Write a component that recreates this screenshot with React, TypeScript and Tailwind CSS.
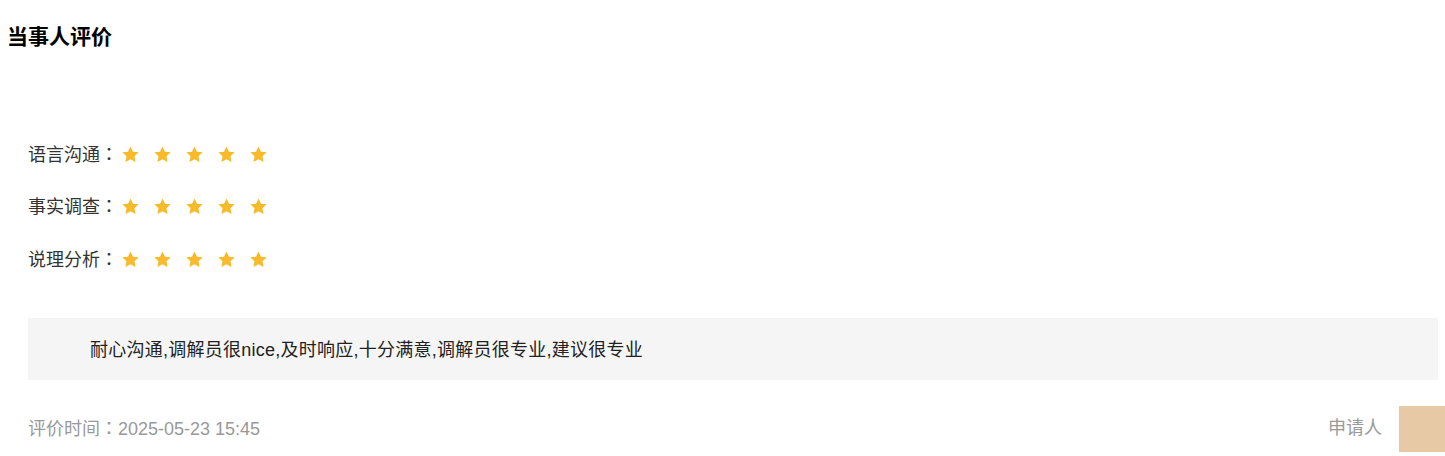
const FONT = "font-['Liberation_Sans','Noto_Sans_CJK_SC',sans-serif]";
// 全角冒号居中显示（JP 字形）
const COLON = "font-['Noto_Sans_CJK_JP',sans-serif]";

const ROWS = [
  { label: "语言沟通", score: 5 },
  { label: "事实调查", score: 5 },
  { label: "说理分析", score: 5 },
];

function Star() {
  return (
    <svg viewBox="0 0 24 24" className="h-[19px] w-[19px]">
      <path
        d="M12 1.8l3.1 6.6 7.2.9-5.3 5 1.4 7.1L12 17.9l-6.4 3.5 1.4-7.1-5.3-5 7.2-.9z"
        fill="#f7ba2a"
      />
    </svg>
  );
}

export default function App() {
  return (
    <div className={`w-[1445px] h-[456px] overflow-hidden bg-white ${FONT}`}>
      <h2 className="pl-[7px] pt-[24px] text-[21px] leading-[26px] font-bold text-black">当事人评价</h2>

      <div className="mt-[78px] pl-[28px]">
        {ROWS.map((r) => (
          <div key={r.label} className="flex h-[52.5px] items-center text-[18px] text-[#333]">
            <span>
              {r.label}
              <span className={COLON}>：</span>
            </span>
            <div className="ml-[3px] flex gap-[13px]">
              {Array.from({ length: r.score }).map((_, i) => (
                <Star key={i} />
              ))}
            </div>
          </div>
        ))}
      </div>

      <div className="ml-[28px] mr-[7px] mt-[32px] flex h-[62px] items-center bg-[#f5f5f5] pl-[62px] pt-[4px] text-[18px] tracking-[0.25px] text-[#222]">
        耐心沟通,调解员很nice,及时响应,十分满意,调解员很专业,建议很专业
      </div>

      <div className="mt-[26px] flex h-[46px] items-center pl-[28px] text-[18px] text-[#999]">
        <span className="flex-1">
          评价时间<span className={COLON}>：</span>2025-05-23 15:45
        </span>
        <span className="mr-[17px]">申请人</span>
        <div className="h-[46px] w-[46px] shrink-0 bg-[#e8c9a5]" />
      </div>
    </div>
  );
}
